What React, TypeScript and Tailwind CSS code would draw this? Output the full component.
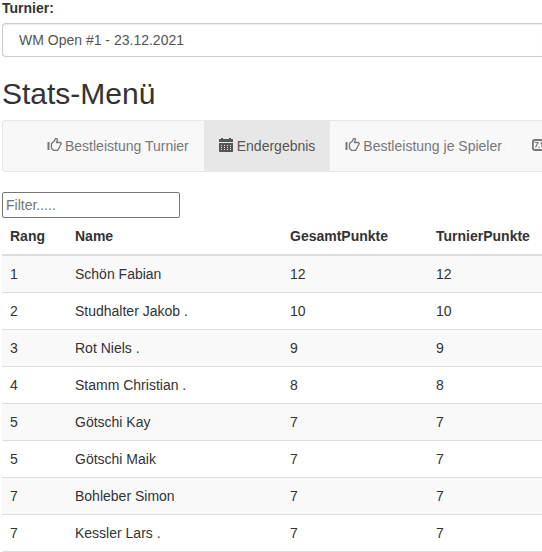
import React from "react";

const navItems = [
    { label: "Bestleistung Turnier", icon: ThumbIcon, active: false },
    { label: "Endergebnis", icon: CalendarIcon, active: true },
    { label: "Bestleistung je Spieler", icon: ThumbIcon, active: false },
    { label: "", icon: SoundIcon, active: false },
];

const players = [
    { rank: 1, name: "Schön Fabian", total: 12, tournament: 12 },
    { rank: 2, name: "Studhalter Jakob .", total: 10, tournament: 10 },
    { rank: 3, name: "Rot Niels .", total: 9, tournament: 9 },
    { rank: 4, name: "Stamm Christian .", total: 8, tournament: 8 },
    { rank: 5, name: "Götschi Kay", total: 7, tournament: 7 },
    { rank: 5, name: "Götschi Maik", total: 7, tournament: 7 },
    { rank: 7, name: "Bohleber Simon", total: 7, tournament: 7 },
    { rank: 7, name: "Kessler Lars .", total: 7, tournament: 7 },
];

function ThumbIcon() {
    return (
        <svg width="15" height="14" viewBox="0 0 15 14" fill="none" aria-hidden="true">
            <path d="M.5 4h2v8h-2z" fill="currentColor" />
            <path
                d="M4.500 10.500V5.500L7.500 3L8.500.600H10L10.500 1.500L9.500 4.500H13.500L14.300 5.500L11.500 11L10.500 12.300H6.500z"
                stroke="currentColor"
                strokeWidth="1.300"
                strokeLinejoin="round"
            />
        </svg>
    );
}

function CalendarIcon() {
    return (
        <svg width="14" height="14" viewBox="0 0 14 14" fill="currentColor" aria-hidden="true">
            <path d="M2 0h2v1h6V0h2v1h1.500l.5.5V4H0V1.500L.5 1H2z" />
            <path
                fillRule="evenodd"
                d="M0 5h14v8.500l-.5.500H.5l-.5-.5zM2 7v1h1V7zM5 7v1h1V7zM8 7v1h1V7zM11 7v1h1V7zM2 9v1h1V9zM5 9v1h1V9zM8 9v1h1V9zM11 9v1h1V9zM2 11v1h1v-1zM5 11v1h1v-1zM8 11v1h1v-1zM11 11v1h1v-1z"
            />
        </svg>
    );
}

function SoundIcon() {
    return (
        <svg width="14" height="14" viewBox="0 0 14 14" fill="none" stroke="currentColor" aria-hidden="true">
            <rect x=".8" y="2" width="12.400" height="10" rx="2" strokeWidth="2" />
            <path d="M2.500 4.500h3.500L3.500 9.500M7 8.500v1.200M8.500 5.500l1.500-1v5" strokeWidth="1.200" />
        </svg>
    );
}

export default function App() {
    return (
        <main className="overflow-x-hidden bg-white pl-0.5 font-['Liberation_Sans',Arial,sans-serif] text-sm leading-5 text-[#333]">
            <label htmlFor="turnier" className="block leading-4 font-bold">
                Turnier:
            </label>
            <select
                id="turnier"
                className="mt-[7px] block h-[34px] w-full appearance-none rounded-l border border-r-0 border-[#ccc] bg-white px-4 text-sm text-[#555] shadow-[inset_0_1px_1px_rgba(0,0,0,0.075)]"
            >
                <option>WM Open #1 - 23.12.2021</option>
            </select>

            <h2 className="mt-5 mb-2.5 text-[30px] leading-[33px]">Stats-Menü</h2>

            <nav className="mb-5 overflow-hidden rounded-l border border-r-0 border-[#e7e7e7] bg-[#f8f8f8] pl-[29px]">
                <ul className="flex">
                    {navItems.map(({ label, icon: Icon, active }, i) => (
                        <li key={i} className="shrink-0">
                            <a
                                href="#"
                                aria-label={label ? undefined : "7.1"}
                                className={
                                    active
                                        ? "flex gap-1 bg-[#e7e7e7] px-[15px] py-[15px] whitespace-nowrap text-[#555]"
                                        : "flex gap-1 px-[15px] py-[15px] whitespace-nowrap text-[#777]"
                                }
                            >
                                <span className="w-3.5 pt-0.5">
                                    <Icon />
                                </span>
                                {label}
                            </a>
                        </li>
                    ))}
                </ul>
            </nav>

            <input
                type="text"
                aria-label="Filter"
                placeholder="Filter....."
                className="block h-[26px] w-[178px] rounded-xs border border-[#767676] px-[3px] text-sm placeholder:text-[#757575]"
            />

            <table className="w-full table-fixed border-separate border-spacing-0 text-left">
                <thead>
                    <tr className="[&>th]:border-b-2 [&>th]:border-[#ddd] [&>th]:p-2">
                        <th className="w-[65px]">Rang</th>
                        <th className="w-[215px]">Name</th>
                        <th className="w-[146px]">GesamtPunkte</th>
                        <th>TurnierPunkte</th>
                    </tr>
                </thead>
                <tbody>
                    {players.map((player) => (
                        <tr
                            key={player.name}
                            className="odd:bg-[#f9f9f9] [&>td]:border-t [&>td]:border-[#ddd] [&>td]:p-2 first:[&>td]:border-t-0 last:[&>td]:border-b"
                        >
                            <td>{player.rank}</td>
                            <td>{player.name}</td>
                            <td>{player.total}</td>
                            <td>{player.tournament}</td>
                        </tr>
                    ))}
                </tbody>
            </table>
        </main>
    );
}
